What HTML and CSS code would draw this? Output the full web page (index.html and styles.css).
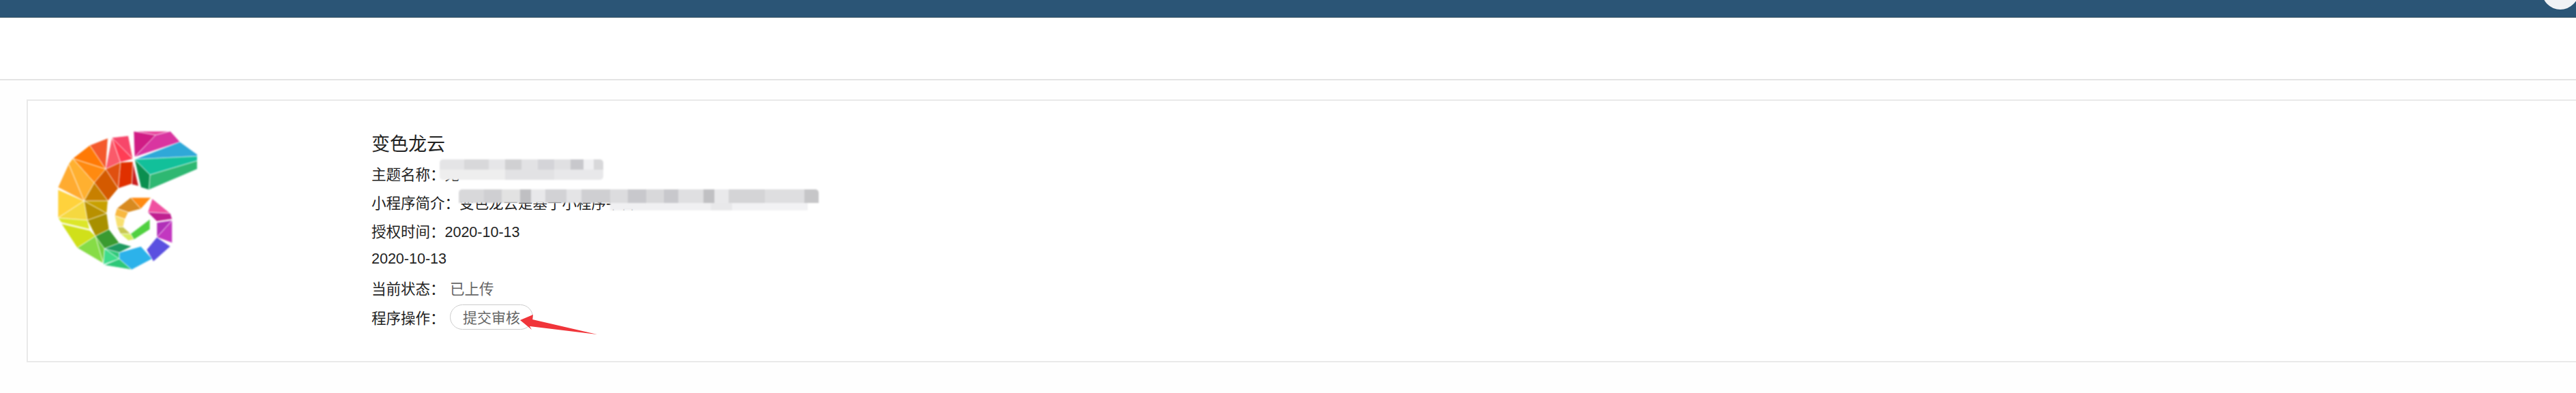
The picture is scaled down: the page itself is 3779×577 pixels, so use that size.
FILE: index.html
```html
<!DOCTYPE html>
<html lang="zh">
<head>
<meta charset="utf-8">
<title>变色龙云</title>
<link rel="stylesheet" href="styles.css">
</head>
<body>
<div class="topbar"><span class="avatar"></span></div>
<div class="subheader"></div>
<main class="content">
  <section class="card">
    <svg class="logo" viewBox="0 0 720 660" aria-label="变色龙云 logo">
      <polygon fill="#e8409a" points="408,38 570,38 505,55"/>
      <polygon fill="#d01c85" points="408,38 505,55 412,152"/>
      <polygon fill="#d935a0" points="505,55 570,38 612,85 412,152"/>
      <polygon fill="#2fa8d8" points="612,85 688,140 688,148 412,162"/>
      <polygon fill="#12c09a" points="412,162 688,148 688,168 480,230"/>
      <polygon fill="#2eb872" points="480,230 688,168 688,205 475,296"/>
      <polygon fill="#0b8f50" points="412,162 480,230 475,296 440,285"/>
      <polygon fill="#f7476a" points="385,58 405,160 312,66"/>
      <polygon fill="#ff3d55" points="312,66 405,160 350,175"/>
      <polygon fill="#fa5a6a" points="312,66 350,175 285,205"/>
      <polygon fill="#f4592c" points="295,68 285,205 215,100"/>
      <polygon fill="#ff7a05" points="215,100 285,205 140,158"/>
      <polygon fill="#ff8a10" points="140,158 285,205 235,265"/>
      <polygon fill="#ffb030" points="122,182 140,158 235,265 190,345"/>
      <polygon fill="#ffab30" points="122,182 190,345 75,285"/>
      <polygon fill="#ffd23c" points="75,295 190,345 75,420"/>
      <polygon fill="#f5d840" points="75,420 190,345 205,430"/>
      <polygon fill="#dce62a" points="75,420 205,430 215,470 90,440"/>
      <polygon fill="#d0e01a" points="90,445 215,475 240,500 160,552"/>
      <polygon fill="#86dc46" points="160,552 240,500 275,620"/>
      <polygon fill="#70d040" points="240,500 280,555 275,620"/>
      <polygon fill="#3fdc8c" points="280,555 345,600 275,625"/>
      <polygon fill="#2ec878" points="278,628 345,600 400,648"/>
      <polygon fill="#2ec878" points="280,555 345,572 345,600"/>
      <polygon fill="#2cb2ea" points="345,572 440,545 490,600 400,648 345,600"/>
      <polygon fill="#5a50e0" points="465,560 510,505 570,545 495,612"/>
      <polygon fill="#c238c0" points="510,505 578,430 578,530"/>
      <polygon fill="#b030b8" points="510,440 578,430 510,505"/>
      <polygon fill="#f050a0" points="490,335 570,400 470,395"/>
      <polygon fill="#c02090" points="470,395 570,400 578,425 510,435"/>
      <polygon fill="#c82020" points="405,172 430,280 400,272"/>
      <polygon fill="#e03000" points="405,172 400,270 340,290 350,175"/>
      <polygon fill="#e05010" points="350,175 340,290 285,205"/>
      <polygon fill="#d45a00" points="285,205 340,290 295,345 235,265"/>
      <polygon fill="#c88000" points="235,265 295,345 190,345"/>
      <polygon fill="#c8a000" points="190,345 295,345 290,400"/>
      <polygon fill="#b89000" points="190,345 290,400 205,430"/>
      <polygon fill="#a89000" points="205,430 290,400 300,470 240,500"/>
      <polygon fill="#3a9a30" points="240,500 300,470 345,530 280,555"/>
      <polygon fill="#1e9a60" points="280,555 345,530 400,545 345,572"/>
      <polygon fill="#ff8a12" points="395,330 485,330 440,380"/>
      <polygon fill="#d88a20" points="334,378 395,330 440,380 385,395"/>
      <polygon fill="#f8b840" points="325,410 334,378 385,395 370,425"/>
      <polygon fill="#f8e070" points="325,410 370,425 362,460 335,460"/>
      <polygon fill="#c8c850" points="335,460 362,460 395,490 350,490"/>
      <polygon fill="#d8ec60" points="350,490 395,490 410,515 385,520"/>
      <polygon fill="#50d040" points="395,490 480,425 480,470 410,515"/>
    </svg>
    <div class="info">
      <h2 class="title">变色龙云</h2>
      <p class="row">主题名称：<span class="masked">无<i class="mosaic mosaic-name"></i></span></p>
      <p class="row">小程序简介：<span class="masked">变色龙云是基于小程序平台<i class="mosaic mosaic-intro"></i></span></p>
      <p class="row">授权时间：2020-10-13</p>
      <p class="row">2020-10-13</p>
      <p class="row"><span class="label">当前状态：</span><span class="status">已上传</span></p>
      <p class="row"><span class="label">程序操作：</span><button class="pill" type="button">提交审核</button></p>
      <svg class="arrow" viewBox="0 0 120 34"><polygon fill="#f0353a" points="3,8 22,0 21,7 116,29 17,17 20,22"/></svg>
    </div>
  </section>
</main>
</body>
</html>
```
FILE: styles.css
```css
* { box-sizing: border-box; }
html, body { margin: 0; padding: 0; }
body {
  width: 3779px;
  height: 577px;
  overflow: hidden;
  background: #fefefe;
  color: #222;
  font-family: "Liberation Sans", "Noto Sans CJK SC", sans-serif;
  font-size: 21.5px;
}
.topbar {
  position: relative;
  height: 26px;
  background: #2b5576;
  border-bottom: 1px solid #3a5566;
  overflow: hidden;
}
.avatar {
  position: absolute;
  right: -4px;
  top: -40px;
  width: 54px;
  height: 54px;
  border-radius: 50%;
  background: #f0f2f5;
}
.subheader {
  height: 92px;
  background: #fff;
  border-bottom: 2px solid #e4e4e4;
}
.content { padding: 28px 0 0 39px; }
.card {
  display: flex;
  align-items: flex-start;
  height: 386px;
  padding: 32px 0 0 19px;
  background: #fff;
  border: 2px solid #e9e9e9;
  border-right: 0;
}
.logo {
  flex: none;
  width: 240px;
  height: 220px;
  filter: blur(1px);
}
.logo polygon {
  stroke: #fff;
  stroke-width: 2;
}
.info {
  position: relative;
  margin: 11px 0 0 245px;
}
.title {
  margin: 0;
  font-size: 27px;
  font-weight: 400;
  line-height: 42px;
}
.row {
  display: flex;
  align-items: center;
  height: 42.2px;
  margin: 0;
  white-space: nowrap;
}
.label { width: 115px; }
.status { color: #666; }
.masked { position: relative; }
.mosaic {
  position: absolute;
  filter: blur(1px);
  border-radius: 5px;
}
.mosaic-name {
  left: -8px;
  top: -5px;
  width: 240px;
  height: 30px;
  background:
    linear-gradient(90deg, #e4e4e6 0 15%, #d8d8da 15% 30%, #e6e6e8 30% 40%, #d0d0d2 40% 50%, #e2e2e4 50% 60%, #d4d4d8 60% 70%, #e0e0e2 70% 80%, #c8c8cc 80% 88%, #f0f0f2 88% 94%, #d8d8da 94% 100%) top / 100% 50% no-repeat,
    linear-gradient(90deg, #eeeeee 0 40%, #e2e2e4 40% 70%, #e8e8ea 70% 100%) bottom / 100% 50% no-repeat;
}
.mosaic-intro {
  left: -1px;
  top: -3px;
  width: 528px;
  height: 31px;
  background:
    linear-gradient(90deg, #d8d8da 0 7%, #cfcfd2 7% 12%, #e2e2e2 12% 17%, #bfbfc2 17% 20%, #e8e8ea 20% 24%, #d2d2d5 24% 30%, #e4e4e6 30% 34%, #cfcfd2 34% 42%, #dcdcde 42% 47%, #c8c8cc 47% 52%, #d8d8da 52% 57%, #c8c8cc 57% 61%, #dfdfe1 61% 68%, #c0c0c3 68% 71%, #e9e9eb 71% 75%, #d4d4d6 75% 85%, #dedee0 85% 96%, #c6c6c8 96% 100%) top / 100% 65% no-repeat,
    linear-gradient(90deg, rgba(255,255,255,0) 0 42%, #f0f0f2 42% 70%, #e8e8ea 70% 76%, #f2f2f4 76% 97%, #fff 97% 100%) bottom / 100% 35% no-repeat;
}
.pill {
  width: 122px;
  height: 37px;
  margin: 0;
  padding: 0 0 0 18px;
  text-align: left;
  background: #fff;
  border: 1px solid #ccc;
  border-radius: 19px;
  color: #666;
  font-family: inherit;
  font-size: 21px;
}
.arrow {
  position: absolute;
  left: 215px;
  top: 271px;
  width: 120px;
  height: 34px;
}
```
